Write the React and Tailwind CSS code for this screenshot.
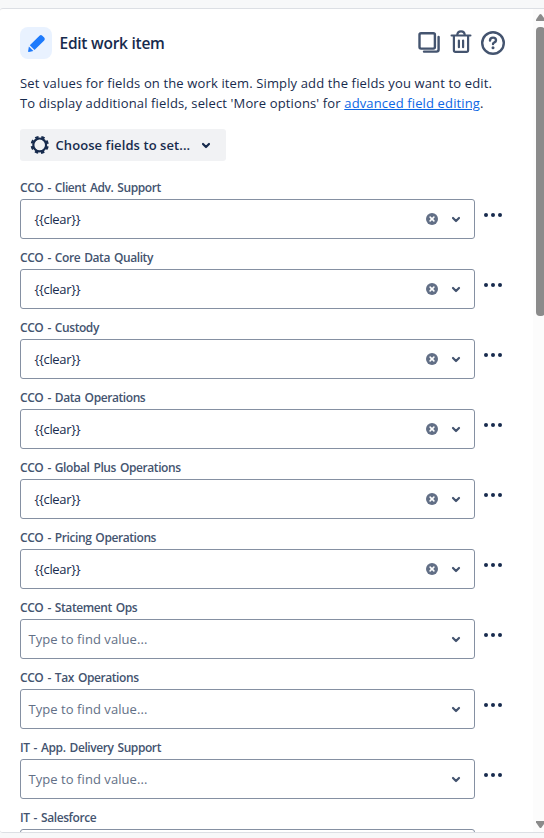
import React from 'react';

const fields = [
  { label: 'CCO - Client Adv. Support', value: '{{clear}}' },
  { label: 'CCO - Core Data Quality', value: '{{clear}}' },
  { label: 'CCO - Custody', value: '{{clear}}' },
  { label: 'CCO - Data Operations', value: '{{clear}}' },
  { label: 'CCO - Global Plus Operations', value: '{{clear}}' },
  { label: 'CCO - Pricing Operations', value: '{{clear}}' },
  { label: 'CCO - Statement Ops', placeholder: 'Type to find value...' },
  { label: 'CCO - Tax Operations', placeholder: 'Type to find value...' },
  { label: 'IT - App. Delivery Support', placeholder: 'Type to find value...' },
  { label: 'IT - Salesforce' },
];

function Chevron({ className }) {
  return (
    <svg viewBox="0 0 24 24" className={className} fill="none" stroke="currentColor" strokeWidth="2.2" strokeLinecap="round" strokeLinejoin="round">
      <path d="M9 11l3 3 3-3" />
    </svg>
  );
}

function Pencil() {
  return (
    <svg viewBox="0 0 32 32" className="size-8 text-[#1d7afc]" fill="currentColor">
      <path d="M9.800 18.300 19.500 8.700q1.400-1.300 2.800 0l1.900 1.900q1.400 1.400 0 2.800L14.500 23z" />
      <path d="m8.900 19.400 4.500 4.500-4.500 1.100q-.9.1-.8-.8z" />
    </svg>
  );
}

function CopyIcon() {
  return (
    <svg viewBox="0 0 24 26" className="h-[26px] w-6" fill="none" stroke="currentColor" strokeWidth="2.4">
      <rect x="2.500" y="4.200" width="15.400" height="15.400" rx="1.600" />
      <path d="M21.600 8v12.600q0 2-2 2H7" strokeLinecap="round" />
    </svg>
  );
}

function TrashIcon() {
  return (
    <svg viewBox="0 0 24 26" className="h-[26px] w-6" fill="none" stroke="currentColor" strokeWidth="2.2">
      <path d="M2.600 6.500h18.800" strokeLinecap="round" />
      <path d="M8.300 6q0-3.700 3.700-3.700T15.700 6" />
      <path d="M4.900 7v14.200q0 1.600 1.600 1.600h11q1.600 0 1.600-1.600V7" />
      <path d="M9.900 11.600v6.600M14.100 11.600v6.600" strokeLinecap="round" />
    </svg>
  );
}

function HelpIcon() {
  return (
    <svg viewBox="0 0 26 26" className="size-[26px]" fill="none" stroke="currentColor" strokeWidth="2.4" strokeLinecap="round">
      <circle cx="13" cy="14" r="10.800" />
      <path d="M10 11.500q0-2.900 3-2.900t3 2.600q0 1.400-1.500 2.100-1.500.7-1.500 1.800" />
      <circle cx="13" cy="18.800" r="1.500" fill="currentColor" stroke="none" />
    </svg>
  );
}

function GearIcon() {
  return (
    <svg viewBox="0 0 20 20" className="size-5" fill="none" stroke="currentColor">
      <circle cx="9.700" cy="9.900" r="6.400" strokeWidth="2.200" />
      <circle cx="9.700" cy="9.900" r="7.900" strokeWidth="2.400" strokeDasharray="3.400 2.804" strokeDashoffset="-1.400" />
    </svg>
  );
}

function ClearIcon() {
  return (
    <svg viewBox="0 0 12 12" className="size-3">
      <circle cx="6" cy="6" r="6" fill="#626f86" />
      <path d="M4.100 4.100l3.800 3.800M7.900 4.100L4.100 7.900" stroke="#fff" strokeWidth="1.500" strokeLinecap="round" />
    </svg>
  );
}

function Field({ label, value, placeholder }) {
  return (
    <div className="mb-[10px]">
      <div className="h-5 whitespace-nowrap text-[12px] leading-[18px] font-semibold tracking-[-0.42px] [word-spacing:1.3px] text-[#44546f]">{label}</div>
      <div className="flex">
        <div className="flex h-10 w-[455px] items-center rounded-[3px] border border-[#8590a2] bg-white text-[13px]">
          {value && <span className="ml-[13.5px] mt-px tracking-[-0.35px] text-[#172b4d]">{value}</span>}
          {placeholder && <span className="ml-[7.5px] mt-px tracking-[0.06px] text-[#626f86]">{placeholder}</span>}
          <div className="ml-auto mr-[6px] flex items-center text-[#44546f]">
            {value && <ClearIcon />}
            <Chevron className="ml-[6px] size-6" />
          </div>
        </div>
        <div className="ml-[9px] mt-[14px] flex h-1 gap-[3px]">
          <i className="size-1 rounded-full bg-[#172b4d]" />
          <i className="size-1 rounded-full bg-[#172b4d]" />
          <i className="size-1 rounded-full bg-[#172b4d]" />
        </div>
      </div>
    </div>
  );
}

export default function App() {
  return (
    <div className="flex h-[838px] w-[544px] flex-col overflow-hidden bg-[#f7f8f9] pt-2 font-['Open_Sans','Noto_Sans',sans-serif]">
      <div className="flex h-[825px] overflow-hidden rounded-l-[3px] border-y border-[#dcdfe4] bg-white">
        <main className="w-[533px] shrink-0 pl-5 pt-[18px]">
          <header className="flex h-8 items-center">
            <div className="size-8 rounded-lg bg-[#e9f2ff]"><Pencil /></div>
            <h1 className="ml-[7.5px] mb-px whitespace-nowrap text-[15.5px] font-semibold leading-8 tracking-[-0.25px] text-[#172b4d]">Edit work item</h1>
            <div className="mb-[2px] ml-auto mr-[27px] flex text-[#44546f]">
              <CopyIcon />
              <div className="ml-2"><TrashIcon /></div>
              <div className="ml-[7px]"><HelpIcon /></div>
            </div>
          </header>
          <div className="mt-[14px] whitespace-nowrap text-[13px] leading-5 tracking-[0.135px] text-[#172b4d]">
            <p>Set values for fields on the work item. Simply add the fields you want to edit.</p>
            <p>To display additional fields, select 'More options' for <a className="text-[#0c66e4] underline">advanced field editing</a>.</p>
          </div>
          <button className="mt-4 flex h-8 w-[206px] items-center rounded-[3px] bg-[#f1f2f4] pl-[10px] text-[#172b4d]">
            <GearIcon />
            <span className="ml-[5.5px] mt-px whitespace-nowrap text-[13px] font-semibold tracking-[0.08px]">Choose fields to set...</span>
            <Chevron className="ml-auto mr-2 size-6" />
          </button>
          <section className="mt-[18px]">
            {fields.map((field) => <Field key={field.label} {...field} />)}
          </section>
        </main>
        <aside className="flex w-[11px] shrink-0 flex-col bg-[#fcfcfc] pl-[3px]">
          <svg viewBox="0 0 8 8" className="mt-[4px] h-2 w-2"><path d="M0 8v-1.500l3.500-5q1-1 2 0L8 5v3z" fill="#8b8b8b" /></svg>
          <div className="mt-[6px] h-[289px] w-[9px] rounded-[4px] bg-[#8b8b8b]" />
          <svg viewBox="0 0 8 8" className="mb-[3px] mt-auto h-2 w-2"><path d="M0 0h8v3L5.500 6.500q-1 1-2 0L0 1.500z" fill="#8b8b8b" /></svg>
        </aside>
      </div>
    </div>
  );
}
